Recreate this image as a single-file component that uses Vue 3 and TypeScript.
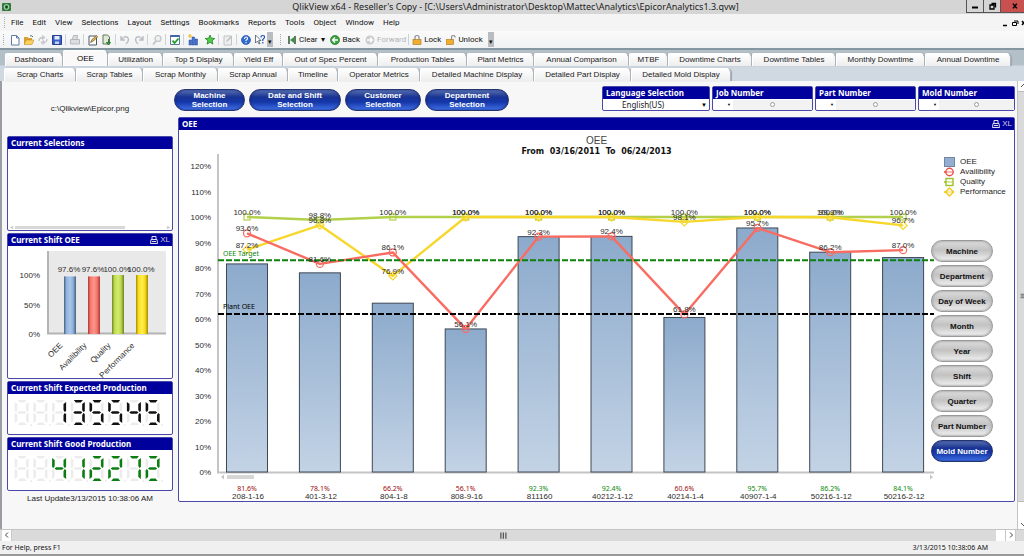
<script setup lang="ts">
import { computed, ref } from 'vue'

type Series = { name: string; color: string; values: number[]; shape: 'circle' | 'square' | 'diamond' }

const menus = ['File', 'Edit', 'View', 'Selections', 'Layout', 'Settings', 'Bookmarks', 'Reports', 'Tools', 'Object', 'Window', 'Help']

const topTabs = ['Dashboard', 'OEE', 'Utilization', 'Top 5 Display', 'Yield Eff', 'Out of Spec Percent', 'Production Tables', 'Plant Metrics', 'Annual Comparison', 'MTBF', 'Downtime Charts', 'Downtime Tables', 'Monthly Downtime', 'Annual Downtime']
const bottomTabs = ['Scrap Charts', 'Scrap Tables', 'Scrap Monthly', 'Scrap Annual', 'Timeline', 'Operator Metrics', 'Detailed Machine Display', 'Detailed Part Display', 'Detailed Mold Display']
const activeTab = ref('OEE')

const pickers = ['Machine', 'Date and Shift', 'Customer', 'Department']
const filters = ['Job Number', 'Part Number', 'Mold Number']
const language = ref('English(US)')
const period = 'From  03/16/2011  To  06/24/2013'

const groups = ['Machine', 'Department', 'Day of Week', 'Month', 'Year', 'Shift', 'Quarter', 'Part Number', 'Mold Number']
const activeGroup = ref('Mold Number')

const bars = [
  { name: '208-1-16', oee: 81.6 },
  { name: '401-3-12', oee: 78.1 },
  { name: '804-1-8', oee: 66.2 },
  { name: '808-9-16', oee: 56.1 },
  { name: '811160', oee: 92.3 },
  { name: '40212-1-12', oee: 92.4 },
  { name: '40214-1-4', oee: 60.6 },
  { name: '40907-1-4', oee: 95.7 },
  { name: '50216-1-12', oee: 86.2 },
  { name: '50216-2-12', oee: 84.1 },
]
const series: Series[] = [
  { name: 'Quality', color: '#b2d04a', shape: 'square', values: [100, 98.8, 100, 100, 100, 100, 100, 100, 100, 100] },
  { name: 'Performance', color: '#f7d72c', shape: 'diamond', values: [87.2, 96.8, 76.9, 100, 100, 100, 98.1, 100, 99.9, 96.7] },
  { name: 'Availibility', color: '#f86c62', shape: 'circle', values: [93.6, 81.6, 86.1, 56.1, 92.3, 92.4, 61.8, 95.7, 86.2, 87.0] },
]
const ticks = Array.from({ length: 13 }, (_, i) => i * 10)
const target = 83
const plant = 62

const cx = (i: number) => 247 + i * 72.9
const cy = (v: number) => 472 - v * 2.55
const line = (s: Series) => s.values.map((v, i) => `${cx(i)},${cy(v)}`).join(' ')
const pct = (v: number) => v.toFixed(1) + '%'

const shiftBars = [
  { name: 'OEE', value: 97.6, fill: 'cylBlue' },
  { name: 'Availibility', value: 97.6, fill: 'cylRed' },
  { name: 'Quality', value: 100, fill: 'cylGreen' },
  { name: 'Performance', value: 100, fill: 'cylYellow' },
]
const cylinders = [
  { id: 'cylBlue', edge: '#45607e', mid: '#8fb2da', light: '#a9c6e8' },
  { id: 'cylRed', edge: '#a83a34', mid: '#f6766b', light: '#ff968c' },
  { id: 'cylGreen', edge: '#6c8423', mid: '#bcd84e', light: '#d2ec70' },
  { id: 'cylYellow', edge: '#a48a00', mid: '#f7dc1e', light: '#fff04e' },
]

const segmentShapes: Record<string, string> = {
  a: 'M3 0H12L10 2.4H5Z',
  b: 'M14 2V11L12.6 12L11.4 10V4Z',
  c: 'M14 23V14L12.6 13L11.4 15V21Z',
  d: 'M3 25H12L10 22.6H5Z',
  e: 'M0 23V14L1.4 13L2.6 15V21Z',
  f: 'M0 2V11L1.4 12L2.6 10V4Z',
  g: 'M2.4 12.5L4 11.3H10L11.6 12.5L10 13.7H4Z',
}
const digitSegments: Record<string, string> = {
  ' ': '', '1': 'bc', '2': 'abged', '3': 'abgcd', '4': 'fgbc', '5': 'afgcd', '7': 'abc',
}
const counters = computed(() => [
  { title: 'Current Shift Expected Production', color: '#111', digits: '  135545'.split('') },
  { title: 'Current Shift Good Production', color: '#0b7d12', digits: '  412272'.split('') },
])
</script>

<template>
  <div class="window">
    <header class="titlebar">
      <svg class="app-icon" viewBox="0 0 9 8"><rect width="9" height="8" rx="1" fill="#2f7a3b" /><circle cx="4.5" cy="4" r="2.4" fill="none" stroke="#bfe3c0" /><circle cx="4.5" cy="4" r="1" fill="#133d1a" /></svg>
      <h1>QlikView x64 - Reseller's Copy - [C:\Users\Administrator\Desktop\Mattec\Analytics\EpicorAnalytics1.3.qvw]</h1>
      <div class="window-buttons">
        <button aria-label="Minimize"><svg viewBox="0 0 16 12"><path d="M5 7.5h6" stroke="#000" stroke-width="2" /></svg></button>
        <button aria-label="Restore"><svg viewBox="0 0 16 12"><path d="M6 5h4v4H6zM7.500 3.500h4v4" fill="none" stroke="#000" stroke-width="1.3" /></svg></button>
        <button class="close" aria-label="Close"><svg viewBox="0 0 24 12"><path d="M12.500 3.500l4 5M16.500 3.500l-4 5" stroke="#000" stroke-width="1.6" /></svg></button>
      </div>
    </header>

    <nav class="menubar">
      <span class="grip"></span>
      <button v-for="m in menus" :key="m">{{ m }}</button>
      <svg class="mdi" viewBox="0 0 24 10"><path d="M3 7.500h4" stroke="#000" stroke-width="1.500" /><path d="M12.500 4.500h4v3h-4zM14 3h4v3" fill="none" stroke="#000" /><path d="M22 3l3 4M25 3l-3 4" stroke="#000" stroke-width="1.300" /></svg>
    </nav>

    <div class="toolbar">
      <span class="grip"></span>
      <button class="tool" aria-label="New"><svg viewBox="0 0 10 12"><path d="M1.500 1.500h5l2.500 2.500v7H1.500z" fill="#fff" stroke="#5b7ca8" /><path d="M6.500 1.500v2.500h2.500" fill="none" stroke="#5b7ca8" /></svg></button>
      <button class="tool" aria-label="Open"><svg viewBox="0 0 10 12"><path d="M0 3h3.500l1 1H8v6H0z" fill="#d9a032" /><path d="M2 6h8l-2 4.500H0z" fill="#fbd25e" stroke="#b87f1c" stroke-width=".5" /><path d="M6 2q2-1 3 1" fill="none" stroke="#55616e" /></svg></button>
      <button class="tool" aria-label="Reload"><svg viewBox="0 0 10 12"><path d="M1 7q0-3.500 4-3.500M4 1.500l2.500 2L4 5.500M9 5q0 3.500-4 3.500M6 6.500l-2.500 2L6 10.500" fill="none" stroke="#c3c6ca" stroke-width="1.300" /></svg></button>
      <button class="tool" aria-label="Save"><svg viewBox="0 0 10 12"><path d="M.5 1.500h9v9h-9z" fill="#3b5fd0" stroke="#25408f" /><path d="M2.500 2h5v3.500h-5z" fill="#e8eefb" /><path d="M3 7.500h4V10H3z" fill="#c8d3ee" /></svg></button>
      <i class="sep"></i>
      <button class="tool" aria-label="Print"><svg viewBox="0 0 10 12"><path d="M2.500 5l1-3.500h4L7 5M.5 5.500h9V10h-9z" fill="#dcdde0" stroke="#b5b7bb" /></svg></button>
      <i class="sep"></i>
      <button class="tool" aria-label="Edit script"><svg viewBox="0 0 10 12"><path d="M1 2h7.500v9H1z" fill="#fff" stroke="#4e5864" /><path d="M2.500 8.500L4 5.500l4.500-4 1.200 1.300L5.500 7z" fill="#e5b940" stroke="#4d4324" stroke-width=".6" /></svg></button>
      <button class="tool" aria-label="Export"><svg viewBox="0 0 10 12"><path d="M1 1h4.500l2 2v7H1z" fill="#dfead6" stroke="#64745c" /><path d="M6.500 5v4M4.500 8.500l2 2.500 2-2.500z" fill="#4aa140" stroke="#2d7c2b" /></svg></button>
      <i class="sep"></i>
      <button class="tool" aria-label="Undo"><svg viewBox="0 0 10 12"><path d="M1 2v4h4M1.500 5.500Q5 1 8 4q1.500 3-2 6" fill="none" stroke="#b9bdc3" stroke-width="1.400" /></svg></button>
      <button class="tool" aria-label="Redo"><svg viewBox="0 0 10 12"><path d="M9 2v4H5M8.500 5.500Q5 1 2 4q-1.500 3 2 6" fill="none" stroke="#b9bdc3" stroke-width="1.400" /></svg></button>
      <i class="sep"></i>
      <button class="tool" aria-label="Search"><svg viewBox="0 0 10 12"><circle cx="6" cy="4.500" r="3" fill="#eee" stroke="#c0c2c6" stroke-width="1.200" /><path d="M4 7L1 10.500" stroke="#c0c2c6" stroke-width="1.800" /></svg></button>
      <i class="sep"></i>
      <button class="tool" aria-label="Current selections"><svg viewBox="0 0 10 12"><path d="M.5 1.500h9v9h-9z" fill="#fff" stroke="#5a7ba4" /><path d="M.5 2h9" stroke="#3f66a5" stroke-width="2" /><path d="M2.500 6.500l2 2.500 4-4.500" fill="none" stroke="#1fa024" stroke-width="1.800" /></svg></button>
      <i class="sep"></i>
      <button class="tool" aria-label="Quick chart"><svg viewBox="0 0 10 12"><path d="M1 6h2.500v5H1zM4 3h2.500v8H4zM7 5h2.500v6H7z" fill="#4b74cf" stroke="#274894" stroke-width=".5" /><path d="M2 0v4M0 2h4" stroke="#efb727" stroke-width="1.200" /></svg></button>
      <button class="tool star" aria-label="Add bookmark"><svg viewBox="0 0 10 12"><path d="M5 1l1.300 3.200 3.400.3-2.600 2.200.8 3.400L5 8.300 2.100 10.100l.8-3.400L.3 4.500l3.400-.3z" fill="#4fce48" stroke="#1d7d22" stroke-width=".8" /></svg></button>
      <i class="sep"></i>
      <button class="tool" aria-label="Notes"><svg viewBox="0 0 10 12"><path d="M1 2h7.500v9H1z" fill="#eee" stroke="#c0c2c5" /><path d="M3 8l1-2 4-4 1 1-4 4z" fill="#bbb" /></svg></button>
      <i class="sep"></i>
      <button class="tool" aria-label="Help"><svg viewBox="0 0 10 12"><circle cx="5" cy="6" r="4.500" fill="#2f6ad0" stroke="#1b4596" stroke-width=".6" /><path d="M3.500 5q0-2 1.500-2t1.500 1.400q0 1-1.500 1.900v.7M5 8v1.200" fill="none" stroke="#fff" stroke-width="1.100" /></svg></button>
      <button class="tool" aria-label="Context help"><svg viewBox="0 0 10 12"><path d="M.5 1v8l2-2 1.500 3 1-.5L3.700 6.500H6z" fill="#fff" stroke="#345" stroke-width=".7" /><path d="M6 3.500q0-2 1.800-2t1.700 1.700q0 1-1.700 2.300v1.500M7.800 8v1.500" fill="none" stroke="#1f53b8" stroke-width="1.200" /></svg></button>
      <span class="more">▾</span>
      <span class="grip second"></span>
      <button class="labelled"><svg viewBox="0 0 10 12"><path d="M2 2v8M8 2v8" stroke="#3f5a45" stroke-width="1.600" /><path d="M7 3v6L3 6z" fill="#2f9a3c" /></svg>Clear<span class="caret">▾</span></button>
      <button class="labelled"><svg viewBox="0 0 10 12"><circle cx="5" cy="6" r="4.500" fill="#39a33c" stroke="#1f6f28" stroke-width=".7" /><path d="M8 6H3M5 3.500L2.500 6 5 8.500" fill="none" stroke="#fff" stroke-width="1.300" /></svg>Back</button>
      <button class="labelled off"><svg viewBox="0 0 10 12"><circle cx="5" cy="6" r="4.500" fill="#c9cbcd" /><path d="M2 6h5M5 3.500L7.500 6 5 8.500" fill="none" stroke="#fff" stroke-width="1.300" /></svg>Forward</button>
      <i class="sep"></i>
      <button class="labelled lock"><svg viewBox="0 0 10 12"><path d="M3 6V3.500q0-2 2-2t2 2V6" fill="none" stroke="#8d8d8d" stroke-width="1.200" /><rect x="1" y="5.500" width="8" height="5" fill="#efae2f" stroke="#a8731a" stroke-width=".6" /></svg>Lock</button>
      <button class="labelled"><svg viewBox="0 0 10 12"><path d="M5.500 6V3.500q0-2 1.800-2t1.700 2" fill="none" stroke="#8d8d8d" stroke-width="1.200" /><rect x="0" y="5.500" width="7.500" height="5" fill="#efae2f" stroke="#a8731a" stroke-width=".6" /></svg>Unlock</button>
      <span class="more">▾</span>
    </div>

    <nav class="tabs">
      <div class="tab-row first">
        <button v-for="t in topTabs" :key="t" :class="{ active: t === activeTab }" @click="activeTab = t">{{ t }}</button>
      </div>
      <div class="tab-row second">
        <button v-for="t in bottomTabs" :key="t" :class="{ active: t === activeTab }" @click="activeTab = t">{{ t }}</button>
      </div>
    </nav>

    <div class="workspace">
      <aside class="side">
        <p class="logo-path">c:\Qlikview\Epicor.png</p>

        <section class="panel selections">
          <h2>Current Selections</h2>
          <div class="selections-body">
            <div class="mini-scroll"><span>◂</span><i></i><span>▸</span></div>
          </div>
        </section>

        <section class="panel">
          <h2>Current Shift OEE <span class="panel-icons"><svg viewBox="0 0 8 8"><path d="M2 3V.5h4V3M1 3.500h6M1 3.500L.5 7.500h7L7 3.500M2 5.500h4" fill="none" stroke="#dde" /></svg>XL</span></h2>
          <svg class="drawing" viewBox="8 246 164 132">
            <defs>
              <linearGradient v-for="c in cylinders" :id="c.id" :key="c.id">
                <stop offset="0" :stop-color="c.edge" /><stop offset=".2" :stop-color="c.mid" /><stop offset=".5" :stop-color="c.light" /><stop offset=".75" :stop-color="c.mid" /><stop offset="1" :stop-color="c.edge" />
              </linearGradient>
            </defs>
            <rect x="47" y="251" width="119" height="83" fill="#e9e9e9" />
            <path d="M48 251V333.500H166" fill="none" stroke="#b4b4b4" stroke-width="2" />
            <g class="axis" text-anchor="end"><text x="40" y="278">100%</text><text x="40" y="308">50%</text><text x="40" y="337">0%</text></g>
            <g v-for="(b, i) in shiftBars" :key="b.name" class="axis">
              <rect :x="64 + i * 24" :y="334 - b.value * 0.59" width="12" :height="b.value * 0.59" :fill="`url(#${b.fill})`" />
              <text :x="69 + i * 24" y="272" text-anchor="middle">{{ pct(b.value) }}</text>
              <text :transform="`translate(${63 + i * 24} 346) rotate(-45)`" text-anchor="end">{{ b.name }}</text>
            </g>
          </svg>
        </section>

        <section v-for="c in counters" :key="c.title" class="panel">
          <h2>{{ c.title }}</h2>
          <svg class="drawing" viewBox="0 0 164 40" role="img" :aria-label="c.digits.join('').trim()">
            <g v-for="(d, i) in c.digits" :key="i" :transform="`translate(${6.7 + i * 18.7} 6)`">
              <path v-for="(shape, key) in segmentShapes" :key="key" :d="shape" :fill="digitSegments[d].includes(key) ? c.color : '#ececec'" />
              <circle cx="16.500" cy="25" r="1" fill="#ececec" />
            </g>
          </svg>
        </section>

        <p class="updated">Last Update3/13/2015 10:38:06 AM</p>
      </aside>

      <main class="main">
        <div class="controls">
          <button v-for="p in pickers" :key="p" class="pill blue">{{ p }}<br />Selection</button>
          <div class="filters">
            <div class="filter language">
              <label for="language">Language Selection</label>
              <div class="filter-body">
                <select id="language" v-model="language"><option>English(US)</option></select>
                <span class="arrow">▼</span>
              </div>
            </div>
            <div v-for="f in filters" :key="f" class="filter">
              <h2>{{ f }}</h2>
              <div class="filter-body">
                <button class="drop" :aria-label="f + ' list'">▼</button>
                <button class="find" :aria-label="f + ' search'"><svg viewBox="0 0 7 7"><circle cx="3.500" cy="3.500" r="2" fill="#fff" stroke="#999" /></svg></button>
              </div>
            </div>
          </div>
        </div>

        <section class="panel chart">
          <h2>OEE <span class="panel-icons"><svg viewBox="0 0 8 8"><path d="M2 3V.5h4V3M1 3.500h6M1 3.500L.5 7.500h7L7 3.500M2 5.500h4" fill="none" stroke="#dde" /></svg>XL</span></h2>
          <div class="chart-title">
            <h3>OEE</h3>
            <p>{{ period }}</p>
          </div>
          <div class="chart-body">
            <svg class="drawing plot" viewBox="179 157 752 344">
              <defs>
                <linearGradient id="bar" x2="0" y2="1"><stop offset="0" stop-color="#8caacc" /><stop offset="1" stop-color="#c3d3e5" /></linearGradient>
              </defs>
              <path d="M218 154V472.500H934" fill="none" stroke="#c4c4c4" stroke-width="2" />
              <g class="axis" text-anchor="end">
                <text v-for="t in ticks" :key="t" x="211" :y="cy(t) + 3">{{ t }}%</text>
              </g>
              <rect v-for="(b, i) in bars" :key="b.name" :x="cx(i) - 20.5" :y="cy(b.oee)" width="41" :height="472 - cy(b.oee)" fill="url(#bar)" stroke="#3d4855" />
              <g v-for="s in series" :key="s.name" fill="none" :stroke="s.color">
                <polyline :points="line(s)" stroke-width="2.400" stroke-linejoin="round" />
                <template v-for="(v, i) in s.values" :key="i">
                  <circle v-if="s.shape === 'circle'" :cx="cx(i)" :cy="cy(v)" r="3.500" stroke-width="1.300" />
                  <rect v-else-if="s.shape === 'square'" :x="cx(i) - 3" :y="cy(v) - 3" width="6" height="6" stroke-width="1.200" />
                  <path v-else :d="`M${cx(i)} ${cy(v) - 4}l4 4-4 4-4-4z`" stroke-width="1.300" />
                </template>
              </g>
              <path :d="`M218 ${cy(target)}H934`" stroke="#0c7f0c" stroke-width="2" stroke-dasharray="6 2" />
              <path :d="`M218 ${cy(plant)}H934`" stroke="#000" stroke-width="2" stroke-dasharray="6 2" />
              <g v-for="s in series" :key="s.name" class="axis" text-anchor="middle">
                <text v-for="(v, i) in s.values" :key="i" :x="cx(i)" :y="cy(v) - 2">{{ pct(v) }}</text>
              </g>
              <text class="ref" x="223" y="256" fill="#0c7f0c">OEE Target</text>
              <text class="ref" x="223" y="309" fill="#000">Plant OEE</text>
              <path d="M224 474.500v5l-3-2.500zM930 474.500v5l3-2.500z" fill="#c6c6c6" />
              <rect x="227" y="475" width="27" height="4" fill="#d6d6d6" />
              <g v-for="(b, i) in bars" :key="b.name" text-anchor="middle">
                <text class="ref" :x="cx(i)" y="491" :fill="b.oee >= 83 ? '#0c8a0c' : '#9c0c0c'">{{ pct(b.oee) }}</text>
                <text class="cat" :x="cx(i) + 1" y="499">{{ b.name }}</text>
              </g>
            </svg>
            <div class="chart-side">
              <ul class="legend">
                <li><svg viewBox="0 0 11 10"><rect x=".5" y=".5" width="10" height="9" fill="#93aed0" stroke="#6f87a3" /></svg>OEE</li>
                <li><svg viewBox="0 0 11 10"><path d="M0 5h9" stroke="#f86c62" stroke-width="2" /><circle cx="5.500" cy="5" r="3.700" fill="#fff" fill-opacity=".5" stroke="#f04f48" stroke-width="1.400" /></svg>Availibility</li>
                <li><svg viewBox="0 0 11 10"><path d="M0 5h9" stroke="#b2d04a" stroke-width="2" /><rect x="2" y="1.500" width="7" height="7" fill="#fff" fill-opacity=".5" stroke="#9cc22c" stroke-width="1.400" /></svg>Quality</li>
                <li><svg viewBox="0 0 11 10"><path d="M0 5h10" stroke="#f7d72c" stroke-width="2" /><path d="M5.500 1l4 4-4 4-4-4z" fill="#fff" fill-opacity=".5" stroke="#eec81a" stroke-width="1.400" /></svg>Performance</li>
              </ul>
              <div class="groups">
                <button v-for="g in groups" :key="g" class="pill" :class="g === activeGroup ? 'blue' : 'grey'" @click="activeGroup = g">{{ g }}</button>
              </div>
            </div>
          </div>
        </section>
      </main>

      <div class="vscroll">
        <span class="end"><svg viewBox="0 0 7 10"><path d="M3 6l3-3 3 3" fill="none" stroke="#555" /></svg></span>
        <span class="thumb"><svg viewBox="0 0 7 8"><path d="M3 1.500h4M3 3.500h4M3 5.500h4" stroke="#555" /></svg></span>
        <span class="track"></span>
        <span class="end"><svg viewBox="0 0 7 10"><path d="M3 4l3 3 3-3" fill="none" stroke="#555" /></svg></span>
      </div>
    </div>

    <div class="hscroll">
      <span class="end"><svg viewBox="0 0 10 10"><path d="M6 2.500L3.500 5 6 7.500" fill="none" stroke="#444" /></svg></span>
      <span class="thumb"><svg viewBox="0 0 8 8"><path d="M1.500 2v5M3.500 2v5M5.500 2v5" stroke="#555" /></svg></span>
      <span class="end"></span>
      <span class="end"><svg viewBox="0 0 10 10"><path d="M4 2.500L6.500 5 4 7.500" fill="none" stroke="#444" /></svg></span>
      <span class="corner"></span>
    </div>

    <footer class="status"><span>For Help, press F1</span><span>3/13/2015 10:38:06 AM</span></footer>
  </div>
</template>

<style>
body { margin: 0; }
</style>

<style scoped>
* { box-sizing: border-box; }
.window { display: flex; flex-direction: column; min-height: 100vh; background: #f7f7f7; font: 8px/10px "Liberation Sans", Arial, sans-serif; color: #222; overflow: hidden; }
h1, h2, h3, p, ul { margin: 0; padding: 0; font: inherit; }
button, select { margin: 0; padding: 0; border: 0; background: none; font: inherit; color: inherit; }
svg { display: block; }

.titlebar { display: flex; align-items: flex-start; height: 14px; background: #d5d5d5; color: #222; }
.app-icon { width: 9px; height: 8px; margin: 3px 0 0 2px; }
.titlebar h1 { flex: 1; margin-left: 54px; text-align: center; font: 9px/14px "Noto Sans", "Open Sans", sans-serif; white-space: nowrap; }
.window-buttons { display: flex; }
.window-buttons button { width: 17px; height: 13px; border: 1px solid #555; border-top: 0; border-right: 0; }
.window-buttons svg { width: 100%; height: 12px; }
.window-buttons .close { width: 24px; background: #c8504e; }

.menubar { display: flex; align-items: center; gap: 9px; height: 17px; padding-left: 4px; background: #f4f4f5; font-family: Roboto, sans-serif; color: #111; }
.menubar .grip { margin-right: -4px; }
.mdi { width: 24px; height: 10px; margin-left: auto; }
.grip { width: 2px; height: 11px; border-left: 1px dotted #aaa; }

.toolbar { display: flex; align-items: center; height: 17px; padding-left: 3px; background: linear-gradient(#fafafa, #f1f2f3); font-family: Roboto, sans-serif; color: #111; }
.tool { flex: none; width: 10px; height: 12px; margin: 0 2px; }
.tool svg, .labelled svg { width: 10px; height: 12px; }
.toolbar .grip { margin-right: 3px; }
.toolbar .second { margin: 0 5px 0 7px; }
.sep { width: 1px; height: 11px; margin: 0 2px 0 1px; background: #cfd2d6; }
.star { margin-left: 5px; }
.more { width: 6px; height: 15px; padding-top: 5px; background: #b9bcc0; line-height: 10px; text-align: center; font-size: 7px; }
.labelled { display: flex; align-items: center; gap: 2px; margin-right: 5px; white-space: nowrap; }
.labelled.off { color: #b4b4b4; margin-right: 1px; }
.lock { margin-left: 1px; }
.caret { margin-left: 2px; }

.tabs { display: flex; flex-direction: column; height: 33px; border-top: 2px solid #8497a1; background: linear-gradient(#b3c0c8 0 48%, #d0d9e1 52%); }
.tab-row { display: grid; align-items: end; }
.tab-row.first { height: 16px; margin: 0 13px 0 5px; grid-template-columns: 58fr 45fr 55fr 71fr 49fr 95fr 89fr 67fr 95fr 39fr 84fr 84fr 89fr 86fr; }
.tab-row.second { height: 15px; margin: 0 293px 0 4px; grid-template-columns: 72fr 67fr 75fr 70fr 50fr 82fr 114fr 97fr 100fr; }
.tab-row button { height: 13px; border: 1px solid #aab3ba; border-top-color: #fff; border-left-color: #fff; border-bottom: 0; border-radius: 2px 5px 0 0; background: linear-gradient(#fff, #ededee); white-space: nowrap; text-align: center; line-height: 12px; box-shadow: 1px 0 1px #98a3ab; }
.tab-row button.active { height: 16px; background: #f9f9f9; color: #000; }

.workspace { flex: 1; display: flex; border-left: 2px solid #9a9da1; }
.side { flex: none; width: 172px; padding: 0 1px 0 5px; display: flex; flex-direction: column; gap: 2px; }
.logo-path { height: 53px; padding-top: 23px; text-align: center; }
.updated { padding-top: 1px; text-align: center; }

.panel { border: 1px solid #4a48a8; border-radius: 2px; background: #fff; }
.panel h2, .filter h2, .filter label { display: block; height: 12px; padding-left: 3px; background: #00009c; color: #fff; font: bold 8px/11px "Noto Sans", "Open Sans", sans-serif; white-space: nowrap; }
.panel h2 { display: flex; justify-content: space-between; }
.panel-icons { display: flex; align-items: center; gap: 2px; padding-right: 2px; font: 8px/10px "Liberation Sans", sans-serif; color: #ccd; }
.panel-icons svg { width: 8px; height: 8px; }
.selections { height: 95px; display: flex; flex-direction: column; }
.selections-body { flex: 1; display: flex; flex-direction: column; justify-content: flex-end; }
.mini-scroll { display: flex; align-items: center; justify-content: space-between; height: 6px; padding: 0 2px; color: #c4c4c4; font-size: 6px; }
.mini-scroll i { width: 110px; height: 3px; margin-right: auto; margin-left: 2px; background: #d8d8d8; }
.drawing { width: 100%; height: auto; overflow: visible; }
.axis, .cat { font: 8px "Liberation Sans", Arial, sans-serif; fill: #2c2c2c; }
.ref { font: 7px "Noto Sans", sans-serif; }

.main { flex: 1; min-width: 0; padding: 5px 2px 0 0; }
.controls { display: flex; align-items: flex-start; gap: 4px; height: 31px; }
.pill { border-radius: 11px; font-weight: 700; line-height: 9px; text-align: center; white-space: nowrap; }
.blue { border: 1px solid #23346e; color: #fff; background: linear-gradient(#5870b0 0, #1a3494 35%, #1436a8 60%, #3f70e6 100%); box-shadow: inset 0 0 2px #16277a; }
.grey { border: 1px solid #999; color: #111; background: linear-gradient(#dedede, #c2c2c2 45%, #d2d2d2 65%, #f4f4f4); box-shadow: inset 0 0 2px 1px #b4b4b4; }
.controls .pill { height: 22px; margin-top: 3px; width: 92px; }
.controls .pill:nth-child(1) { width: 71px; }
.controls .pill:nth-child(3) { width: 76px; }
.controls .pill:nth-child(4) { width: 84px; }
.filters { display: flex; gap: 2px; margin-left: auto; }
.filter { width: 101px; height: 25px; border: 1px solid #4a48a8; border-radius: 2px; background: #fff; }
.filter.language { width: 108px; }
.filter:last-child { width: 97px; }
.filter-body { display: flex; align-items: center; height: 11px; }
.filter select { flex: 1; appearance: none; height: 11px; padding-left: 19px; font: 8px/11px "Noto Sans", sans-serif; }
.arrow { padding-right: 2px; font-size: 6px; color: #000; }
.drop { width: 18px; padding-left: 14px; font-size: 4px; color: #000; }
.filter .find { flex: 1; height: 10px; margin-left: 2px; background: #f2f2f2; }
.find svg { width: 7px; height: 7px; margin: 0 auto; }

.chart { margin-left: 4px; }
.chart-title { height: 27px; padding-top: 4px; text-align: center; }
.chart-title h3 { font: 10px/13px "Liberation Sans", sans-serif; color: #444; }
.chart-title p { font: bold 8px/10px "DejaVu Sans", sans-serif; color: #111; white-space: pre; }
.chart-body { display: flex; align-items: flex-start; }
.plot { flex: 1; min-width: 0; }
.chart-side { position: relative; flex: none; width: 83px; }
.legend { list-style: none; padding-left: 13px; }
.legend li { display: flex; align-items: center; gap: 5px; height: 10px; white-space: nowrap; }
.legend svg { width: 11px; height: 10px; }
.groups { display: flex; flex-direction: column; gap: 3px; width: 62px; padding-top: 43px; }
.groups .pill { height: 22px; }

.vscroll { display: flex; flex-direction: column; width: 7px; background: #dadada; border-left: 1px solid #c4c4c4; }
.vscroll .end { height: 10px; background: #fff; }
.vscroll svg { width: 7px; }
.vscroll .thumb { flex: 1; display: flex; align-items: center; border-top: 1px solid #bbb; border-bottom: 1px solid #bbb; }
.vscroll .track { height: 17px; background: #fff; }
.hscroll { display: flex; height: 12px; padding-left: 2px; background: #dadada; border-top: 1px solid #c4c4c4; }
.hscroll .end { width: 10px; background: #fff; border-right: 1px solid #c8c8c8; }
.hscroll svg { height: 10px; }
.hscroll .thumb { flex: 1; display: flex; justify-content: center; }
.hscroll .corner { width: 8px; }
.status { display: flex; justify-content: space-between; height: 15px; padding: 2px 36px 0 2px; background: #f0f0f0; border-bottom: 2px solid #999; font: 7px/10px "Noto Sans", sans-serif; color: #111; }
</style>
